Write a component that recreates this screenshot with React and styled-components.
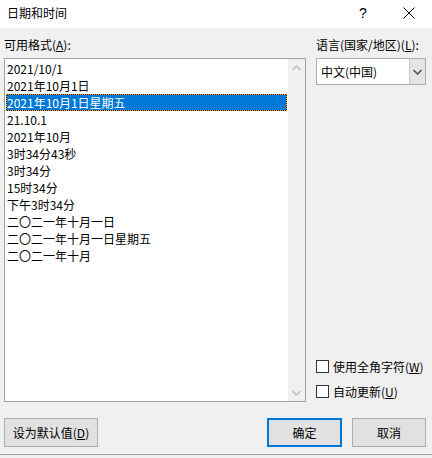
import styled, { createGlobalStyle } from "styled-components"

const GlobalStyle = createGlobalStyle`
  html, body {
    margin: 0;
    padding: 0;
    background: #f0f0f0;
  }
  * {
    box-sizing: border-box;
  }
`

const Window = styled.div`
  width: 432px;
  height: 458px;
  background: #f0f0f0;
  font-family: "Noto Sans CJK SC", "Noto Sans", sans-serif;
  font-size: 12px;
  color: #000;
  display: flex;
  flex-direction: column;
  overflow: hidden;
`

const TitleBar = styled.div`
  height: 28px;
  background: #fff;
  display: flex;
  align-items: center;
  padding-left: 7px;
`

const Title = styled.div`
  flex: 1;
  font-size: 12px;
  line-height: 16px;
  margin-top: -2px;
`

const TitleButton = styled.div`
  width: ${props => props.w}px;
  height: 28px;
  display: flex;
  align-items: center;
  justify-content: center;
  font-family: "Liberation Sans", sans-serif;
  font-size: 14px;
  margin-top: -2px;
`

const Main = styled.div`
  display: flex;
  padding: 9px 6px 0 4px;
`

const LeftCol = styled.div`
  width: 302px;
  display: flex;
  flex-direction: column;
`

const RightCol = styled.div`
  flex: 1;
  margin-left: 10px;
  display: flex;
  flex-direction: column;
`

const Label = styled.div`
  line-height: 16px;
  height: 16px;
  margin-bottom: 5px;
  white-space: nowrap;
`

const U = styled.span`
  text-decoration: underline;
  text-underline-offset: 1px;
`

const ListBox = styled.div`
  height: 344px;
  border: 1px solid #a0a0a0;
  background: #fff;
  display: flex;
`

const Items = styled.div`
  flex: 1;
  padding: 1px;
`

const Item = styled.div`
  height: 17px;
  line-height: 17px;
  padding-left: 1px;
  white-space: nowrap;
  color: ${props => (props.selected ? "#fff" : "#000")};
  background: ${props => (props.selected ? "#0078d7" : "transparent")};
  box-shadow: ${props => (props.selected ? "inset 0 0 0 1px #1a1a1a" : "none")};
  outline: ${props => (props.selected ? "1px dotted #f7a21b" : "none")};
  outline-offset: -1px;
`

const ScrollBar = styled.div`
  width: 17px;
  background: #f0f0f0;
  display: flex;
  flex-direction: column;
  justify-content: space-between;
`

const ScrollArrow = styled.div`
  height: 17px;
  display: flex;
  align-items: center;
  justify-content: center;
`

const Combo = styled.div`
  height: 27px;
  border: 1px solid #adadad;
  background: #fff;
  display: flex;
`

const ComboText = styled.div`
  flex: 1;
  padding-left: 4px;
  line-height: 25px;
`

const ComboButton = styled.div`
  width: 16px;
  background: #e5e5e5;
  border-left: 1px solid #c8c8c8;
  display: flex;
  align-items: center;
  justify-content: center;
`

const Checks = styled.div`
  margin-top: auto;
  padding-bottom: 4px;
  display: flex;
  flex-direction: column;
  gap: 12px;
`

const CheckRow = styled.div`
  display: flex;
  align-items: center;
  height: 13px;
  white-space: nowrap;
`

const CheckBox = styled.div`
  width: 13px;
  height: 13px;
  border: 1px solid #333;
  background: #fff;
  margin-right: 4px;
  flex-shrink: 0;
`

const Footer = styled.div`
  display: flex;
  align-items: center;
  margin-top: 16px;
  padding: 0 6px 0 4px;
`

const Button = styled.div`
  width: ${props => props.w}px;
  height: 29px;
  background: #e1e1e1;
  border: ${props => (props.primary ? "2px solid #0078d7" : "1px solid #adadad")};
  display: flex;
  align-items: center;
  justify-content: center;
  margin-left: ${props => props.ml || 0}px;
`

const Spacer = styled.div`
  flex: 1;
`

const BottomEdge = styled.div`
  margin-top: 7px;
  border-top: 1px solid #a0a0a0;
  flex: 1;
  background: #f0f0f0;
`

const Chevron = ({ up, color = "#c1c1c1" }) => (
  <svg width="9" height="6" viewBox="0 0 9 6">
    <polyline
      points={up ? "0.5,5 4.5,1 8.5,5" : "0.5,1 4.5,5 8.5,1"}
      fill="none"
      stroke={color}
      strokeWidth="1.6"
    />
  </svg>
)

const formats = [
  "2021/10/1",
  "2021年10月1日",
  "2021年10月1日星期五",
  "21.10.1",
  "2021年10月",
  "3时34分43秒",
  "3时34分",
  "15时34分",
  "下午3时34分",
  "二〇二一年十月一日",
  "二〇二一年十月一日星期五",
  "二〇二一年十月",
]

export default function App() {
  return (
    <Window>
      <GlobalStyle />
      <TitleBar>
        <Title>日期和时间</Title>
        <TitleButton w={46}>?</TitleButton>
        <TitleButton w={46}>
          <svg width="12" height="12" viewBox="0 0 12 12">
            <path d="M0.5 0.5 L11.5 11.5 M11.5 0.5 L0.5 11.5" stroke="#000" strokeWidth="1" />
          </svg>
        </TitleButton>
      </TitleBar>
      <Main>
        <LeftCol>
          <Label>
            可用格式(<U>A</U>):
          </Label>
          <ListBox>
            <Items>
              {formats.map((f, i) => (
                <Item key={i} selected={i === 2}>
                  {f}
                </Item>
              ))}
            </Items>
            <ScrollBar>
              <ScrollArrow>
                <Chevron up />
              </ScrollArrow>
              <ScrollArrow>
                <Chevron />
              </ScrollArrow>
            </ScrollBar>
          </ListBox>
        </LeftCol>
        <RightCol>
          <Label>
            语言(国家/地区)(<U>L</U>):
          </Label>
          <Combo>
            <ComboText>中文(中国)</ComboText>
            <ComboButton>
              <Chevron color="#555" />
            </ComboButton>
          </Combo>
          <Checks>
            <CheckRow>
              <CheckBox />
              使用全角字符(<U>W</U>)
            </CheckRow>
            <CheckRow>
              <CheckBox />
              自动更新(<U>U</U>)
            </CheckRow>
          </Checks>
        </RightCol>
      </Main>
      <Footer>
        <Button w={94}>
          设为默认值(<U>D</U>)
        </Button>
        <Spacer />
        <Button w={75} primary>
          确定
        </Button>
        <Button w={74} ml={10}>
          取消
        </Button>
      </Footer>
      <BottomEdge />
    </Window>
  )
}
